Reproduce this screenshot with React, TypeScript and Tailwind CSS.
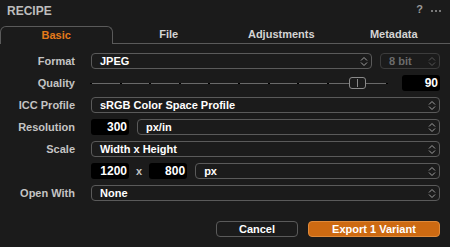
import React from "react";

const font = { fontFamily: '"Liberation Sans", Arial, sans-serif' };

function Chevrons({ dim = false }: { dim?: boolean }) {
  return (
    <svg width="8" height="11" viewBox="0 0 8 11" fill="none" className="shrink-0">
      <path d="M1 4.5 L4 1.5 L7 4.5" stroke={dim ? "#555" : "#a0a0a0"} strokeWidth="1" />
      <path d="M1 6.5 L4 9.5 L7 6.5" stroke={dim ? "#555" : "#a0a0a0"} strokeWidth="1" />
    </svg>
  );
}

function Select({ value, className = "", dim = false }: { value: string; className?: string; dim?: boolean }) {
  return (
    <div
      className={`flex h-[16px] items-center justify-between rounded-[4px] border pl-[8px] pr-[3px] ${
        dim ? "border-[#3c3c3c] text-[#6c6c6c]" : "border-[#5a5a5a] text-white"
      } ${className}`}
    >
      <span className="leading-none">{value}</span>
      <Chevrons dim={dim} />
    </div>
  );
}

function NumBox({ value, className = "" }: { value: string; className?: string }) {
  return (
    <div className={`flex h-[16px] items-center justify-end rounded-[3px] bg-black pr-[2px] text-[12px] text-white ${className}`}>
      {value}
    </div>
  );
}

function Row({ label, children }: { label?: string; children: React.ReactNode }) {
  return (
    <div className="flex h-[16px] items-center">
      <div className="w-[75px] shrink-0 text-right text-[#c4c4c4]">{label}</div>
      <div className="ml-[16px] flex flex-1 items-center">{children}</div>
    </div>
  );
}

function Slider() {
  const ticks = Array.from({ length: 11 });
  return (
    <div className="relative h-[16px] w-[296px]">
      <div className="absolute left-0 right-0 top-[8px] h-px bg-[#6a6a6a]" />
      {ticks.map((_, i) => (
        <div key={i} className="absolute top-[8px] h-px w-[2px] bg-black" style={{ left: `${i * 29.6 - 1}px` }} />
      ))}
      <div className="absolute left-[258px] top-[2px] flex h-[12px] w-[17px] items-center justify-center rounded-[3px] border border-[#8a8a8a] bg-[#1b1b1b]">
        <div className="h-[8px] w-px bg-[#8a8a8a]" />
      </div>
    </div>
  );
}

export default function App() {
  return (
    <div className="h-[247px] w-[450px] overflow-hidden bg-[#1b1b1b] text-[11px] font-bold" style={font}>
      {/* header */}
      <div className="flex h-[26px] items-start justify-between pl-[7px] pr-[9px] pt-[2px]">
        <span className="text-[12px] text-[#bdbdbd]">RECIPE</span>
        <div className="flex items-center gap-[8px] pt-[2px] text-[#9a9a9a]">
          <span className="text-[11px] leading-none">?</span>
          <svg width="10" height="4" viewBox="0 0 10 4" className="mt-[3px]">
            <circle cx="1" cy="2" r="1" fill="#9a9a9a" />
            <circle cx="5" cy="2" r="1" fill="#9a9a9a" />
            <circle cx="9" cy="2" r="1" fill="#9a9a9a" />
          </svg>
        </div>
      </div>

      {/* tabs */}
      <div className="grid h-[17px] grid-cols-4 text-[#d4d4d4]">
        <div className="flex items-center justify-center rounded-t-[6px] border-l border-r border-t border-[#5a5a5a] text-[#e47a1a]">
          Basic
        </div>
        <div className="flex items-center justify-center border-b border-[#5a5a5a]">File</div>
        <div className="flex items-center justify-center border-b border-[#5a5a5a]">Adjustments</div>
        <div className="flex items-center justify-center border-b border-[#5a5a5a]">Metadata</div>
      </div>

      {/* form */}
      <div className="flex flex-col gap-[6px] pr-[10px] pt-[10px]">
        <Row label="Format">
          <Select value="JPEG" className="w-[281px]" />
          <Select value="8 bit" dim className="ml-[8px] flex-1" />
        </Row>
        <Row label="Quality">
          <Slider />
          <NumBox value="90" className="ml-auto w-[38px]" />
        </Row>
        <Row label="ICC Profile">
          <Select value="sRGB Color Space Profile" className="flex-1" />
        </Row>
        <Row label="Resolution">
          <NumBox value="300" className="w-[38px]" />
          <Select value="px/in" className="ml-[8px] flex-1" />
        </Row>
        <Row label="Scale">
          <Select value="Width x Height" className="flex-1" />
        </Row>
        <Row>
          <NumBox value="1200" className="w-[38px]" />
          <span className="mx-[7px] text-[#c4c4c4]">x</span>
          <NumBox value="800" className="w-[38px]" />
          <Select value="px" className="ml-[8px] flex-1" />
        </Row>
        <Row label="Open With">
          <Select value="None" className="flex-1" />
        </Row>
      </div>

      {/* buttons */}
      <div className="flex justify-end gap-[10px] pr-[10px] pt-[20px]">
        <div className="flex h-[16px] w-[82px] items-center justify-center rounded-[4px] border border-[#5a5a5a] text-white">
          Cancel
        </div>
        <div className="flex h-[16px] w-[132px] items-center justify-center rounded-[4px] border border-[#e08a3a] bg-[#cd6a12] text-white">
          Export 1 Variant
        </div>
      </div>
    </div>
  );
}
